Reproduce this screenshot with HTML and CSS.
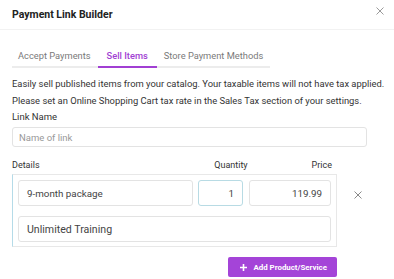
FILE: index.html
```html
<!DOCTYPE html>
<html lang="en">
  <head>
    <meta charset="UTF-8" />
    <meta name="viewport" content="width=device-width, initial-scale=1.0" />
    <title>Payment Link Builder</title>
    <link rel="stylesheet" href="styles.css">
  </head>
  <body>
    <div class="modal">
      <header class="modal-head">
        <h1>Payment Link Builder</h1>
        <button class="close" aria-label="Close">
          <svg width="8" height="8" viewBox="0 0 8 8">
            <path d="M0.5 0.5 L7.5 7.5 M7.5 0.5 L0.5 7.5" stroke="#9a9a9a" stroke-width="1" fill="none" />
          </svg>
        </button>
      </header>

      <section class="modal-body">
        <nav class="tabs">
          <button class="tab">Accept Payments</button>
          <button class="tab valgt">Sell Items</button>
          <button class="tab">Store Payment Methods</button>
        </nav>

        <p class="intro">
          Easily sell published items from your catalog. Your taxable items will not have tax applied.
          Please set an Online Shopping Cart tax rate in the Sales Tax section of your settings.
        </p>

        <label class="field-label" for="linkname">Link Name</label>
        <input id="linkname" class="text-input link-input" type="text" placeholder="Name of link" />

        <div class="items-head">
          <span>Details</span>
          <span class="qty-head">Quantity</span>
          <span class="price-head">Price</span>
        </div>

        <div class="item-row">
          <div class="item-box">
            <div class="item-line">
              <input class="text-input item-name" type="text" value="9-month package" />
              <input class="text-input item-qty" type="text" value="1" />
              <input class="text-input item-price" type="text" value="119.99" />
            </div>
            <input class="text-input item-desc" type="text" value="Unlimited Training" />
          </div>
          <button class="remove" aria-label="Remove">
            <svg width="8" height="8" viewBox="0 0 8 8">
              <path d="M0.5 0.5 L7.5 7.5 M7.5 0.5 L0.5 7.5" stroke="#8a8a8a" stroke-width="1" fill="none" />
            </svg>
          </button>
        </div>

        <div class="actions">
          <button class="add">
            <svg width="7" height="7" viewBox="0 0 7 7">
              <path d="M3.5 0 V7 M0 3.5 H7" stroke="#fff" stroke-width="1.6" fill="none" />
            </svg>
            Add Product/Service
          </button>
        </div>
      </section>
    </div>
  </body>
</html>
```

FILE: styles.css
```css
* {
  box-sizing: border-box;
}

body {
  margin: 0;
  background: #fff;
  color: #333;
  font-family: Roboto, "Liberation Sans", sans-serif;
}

button {
  font-family: inherit;
  border: none;
  background: none;
  padding: 0;
  cursor: pointer;
  white-space: nowrap;
}

.modal-head {
  display: flex;
  align-items: center;
  justify-content: space-between;
  height: 30px;
  padding: 0 10px 1px 12px;
  border-bottom: 1px solid #f2f2f2;
}

.modal-head h1 {
  margin: 0;
  font-size: 10.5px;
  font-weight: 700;
  color: #222;
}

.close {
  display: flex;
  width: 8px;
  height: 8px;
  margin-top: -7px;
}

.modal-body {
  padding: 0 27px 0 12px;
}

.tabs {
  display: flex;
  margin-top: 17px;
  width: max-content;
  border-bottom: 2px solid #ececec;
}

.tab {
  height: 21px;
  padding: 0 7px 2px;
  font-size: 9.3px;
  color: #7a7a7a;
  margin-bottom: -2px;
  border-bottom: 2px solid transparent;
}

.tab:first-child {
  padding-left: 6px;
}

.tab.valgt {
  color: #a13fd3;
  font-weight: 500;
  border-bottom-color: #a13fd3;
  padding: 0 9px 2px;
}

.intro {
  margin: 7px 0 0;
  font-size: 9.4px;
  line-height: 17px;
  width: 380px;
}

.field-label {
  display: block;
  margin-top: 1px;
  font-size: 9.5px;
  line-height: 14px;
  color: #333;
}

.text-input {
  display: block;
  border: 1px solid #e3e3e3;
  border-radius: 3px;
  font-family: inherit;
  color: #444;
  background: #fff;
  outline: none;
}

.text-input::placeholder {
  color: #999;
}

.link-input {
  width: 100%;
  height: 20px;
  margin-top: 3px;
  padding: 0 6px;
  font-size: 9.5px;
}

.items-head {
  display: flex;
  width: 325px;
  margin-top: 11px;
  font-size: 9px;
  line-height: 14px;
  color: #333;
}

.items-head span:first-child {
  flex: 1;
}

.qty-head {
  margin-right: 64px;
}

.price-head {
  margin-right: 5px;
}

.item-row {
  display: flex;
  align-items: flex-start;
  margin-top: 2px;
}

.item-box {
  width: 325px;
  padding: 5px 5px 4px;
  border: 1px solid #e8e8e8;
  border-left-color: #b5dbe8;
  display: flex;
  flex-direction: column;
  gap: 10px;
}

.item-line {
  display: flex;
  gap: 5px;
}

.item-line .text-input,
.item-desc {
  height: 26px;
  padding: 0 8px;
  font-size: 9.8px;
}

.item-name {
  width: 175px;
}

.item-qty {
  width: 45px;
  text-align: right;
  border-color: #b8dbe4;
}

.item-price {
  width: 82px;
  margin-left: 1px;
  text-align: right;
}

.item-desc {
  width: 100%;
  font-size: 10.6px;
}

.remove {
  display: flex;
  margin: 17px 0 0 17px;
}

.actions {
  display: flex;
  justify-content: flex-end;
  width: 325px;
  margin-top: 10px;
}

.add {
  display: flex;
  align-items: center;
  gap: 6px;
  height: 20px;
  padding: 0 10px 0 12px;
  border-radius: 2px;
  background: #a444d8;
  color: #fff;
  font-size: 7.9px;
  font-weight: 700;
}
```
